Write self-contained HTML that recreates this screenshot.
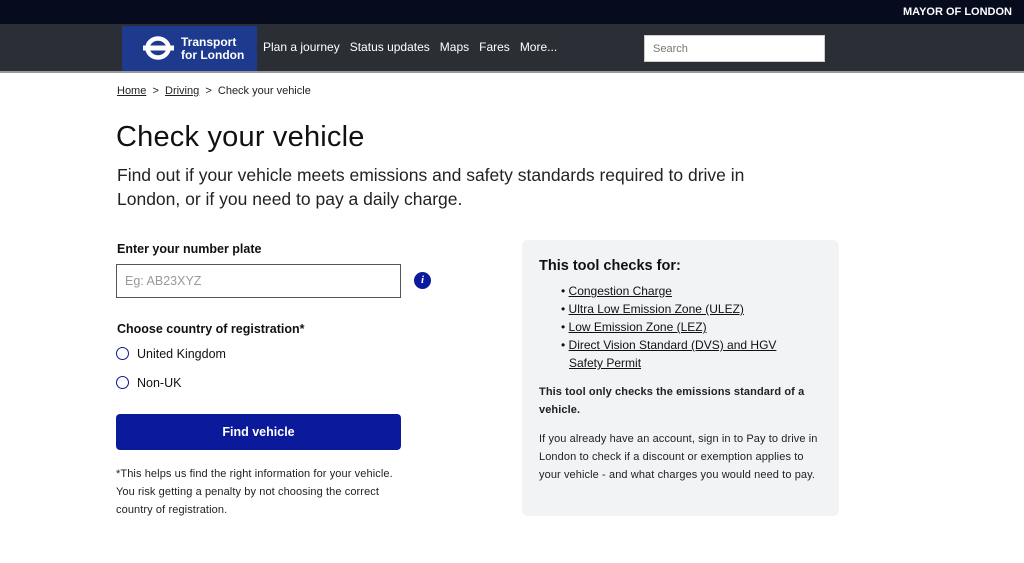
<!DOCTYPE html>
<html><head><meta charset="utf-8"><style>
*{margin:0;padding:0;box-sizing:border-box}
body{width:1024px;height:563px;overflow:hidden;background:#fff;font-family:"Liberation Sans",sans-serif;color:#111;position:relative}
.top{position:absolute;top:0;left:0;width:1024px;height:24px;background:#070b1e;color:#fff;font-size:11px;font-weight:bold;text-align:right;padding:6px 12px 0 0}
.nav{position:absolute;top:24px;left:0;width:1024px;height:49px;background:#2c2e35;border-bottom:2px solid #999}
.logo{position:absolute;left:122px;top:2px;width:135px;height:45px;background:#1e3a8e;color:#fff;font-size:12px;font-weight:bold;line-height:13px;padding:10px 0 0 59px}
.logo svg{position:absolute;left:20px;top:9px}
.links{position:absolute;left:263px;top:16px;color:#fff;font-size:12px}
.links span{margin-right:10px}
.search{position:absolute;left:644px;top:11px;width:181px;height:27px;background:#fff;border:1px solid #ccc;font-size:11px;color:#777;padding:7px 8px}
.bc{position:absolute;left:117px;top:85px;font-size:11px;color:#222}
h1{position:absolute;left:116px;top:121px;font-size:29px;font-weight:normal;letter-spacing:.2px}
.lead{position:absolute;left:117px;top:163px;width:690px;font-size:17.5px;line-height:24px;color:#222}
.lbl{position:absolute;left:117px;font-size:12.5px;font-weight:bold}
.inp{position:absolute;left:116px;top:264px;width:285px;height:34px;border:1px solid #555;font-size:12.5px;color:#999;padding:9px 8px}
.info{position:absolute;left:414px;top:272px;width:17px;height:17px;border-radius:50%;background:#0a1a9a;color:#fff;font:italic bold 11px "Liberation Serif",serif;text-align:center;line-height:17px}
.radio{position:absolute;left:116px;font-size:12.5px}
.radio b{display:inline-block;width:13px;height:13px;border:1.5px solid #0a1a9a;border-radius:50%;vertical-align:-2px;margin-right:8px}
.btn{position:absolute;left:116px;top:414px;width:285px;height:36px;background:#0a1a9a;border-radius:4px;color:#fff;font-size:12.5px;font-weight:bold;text-align:center;line-height:36px}
.note{position:absolute;left:116px;top:465px;width:300px;font-size:11px;line-height:18px;color:#222;letter-spacing:.1px}
.box{position:absolute;left:522px;top:240px;width:317px;height:276px;background:#f2f3f4;border-radius:6px;padding:18px 17px}
.box h3{font-size:14.5px;margin-bottom:8px}
.box ul{list-style:none;font-size:12px;line-height:18px;margin-left:22px;width:240px}
.box ul li{padding-left:8px;text-indent:-8px}
.box ul li:before{content:"• "}
.box p{font-size:11px;line-height:18px;margin-top:11px;color:#222;letter-spacing:.1px}
</style></head><body>
<div class="top">MAYOR OF LONDON</div>
<div class="nav">
<div class="logo"><svg width="34" height="26" viewBox="0 0 34 26"><ellipse cx="16" cy="13" rx="10.5" ry="9.5" fill="none" stroke="#fff" stroke-width="4.5"/><rect x="1" y="10.5" width="31" height="5" fill="#fff"/></svg>Transport<br>for London</div>
<div class="links"><span>Plan a journey</span><span>Status updates</span><span>Maps</span><span>Fares</span><span>More...</span></div>
<div class="search">Search</div>
</div>
<div class="bc"><u>Home</u> &nbsp;&gt;&nbsp; <u>Driving</u> &nbsp;&gt;&nbsp; Check your vehicle</div>
<h1>Check your vehicle</h1>
<div class="lead">Find out if your vehicle meets emissions and safety standards required to drive in London, or if you need to pay a daily charge.</div>
<div class="lbl" style="top:242px">Enter your number plate</div>
<div class="inp">Eg: AB23XYZ</div>
<div class="info">i</div>
<div class="lbl" style="top:322px">Choose country of registration*</div>
<div class="radio" style="top:347px"><b></b>United Kingdom</div>
<div class="radio" style="top:376px"><b></b>Non-UK</div>
<div class="btn">Find vehicle</div>
<div class="note">*This helps us find the right information for your vehicle.<br>You risk getting a penalty by not choosing the correct<br>country of registration.</div>
<div class="box"><h3>This tool checks for:</h3>
<ul><li><u>Congestion Charge</u></li><li><u>Ultra Low Emission Zone (ULEZ)</u></li><li><u>Low Emission Zone (LEZ)</u></li><li><u>Direct Vision Standard (DVS) and HGV Safety Permit</u></li></ul>
<p><b>This tool only checks the emissions standard of a vehicle.</b></p>
<p>If you already have an account, sign in to Pay to drive in London to check if a discount or exemption applies to your vehicle - and what charges you would need to pay.</p></div>
</body></html>
